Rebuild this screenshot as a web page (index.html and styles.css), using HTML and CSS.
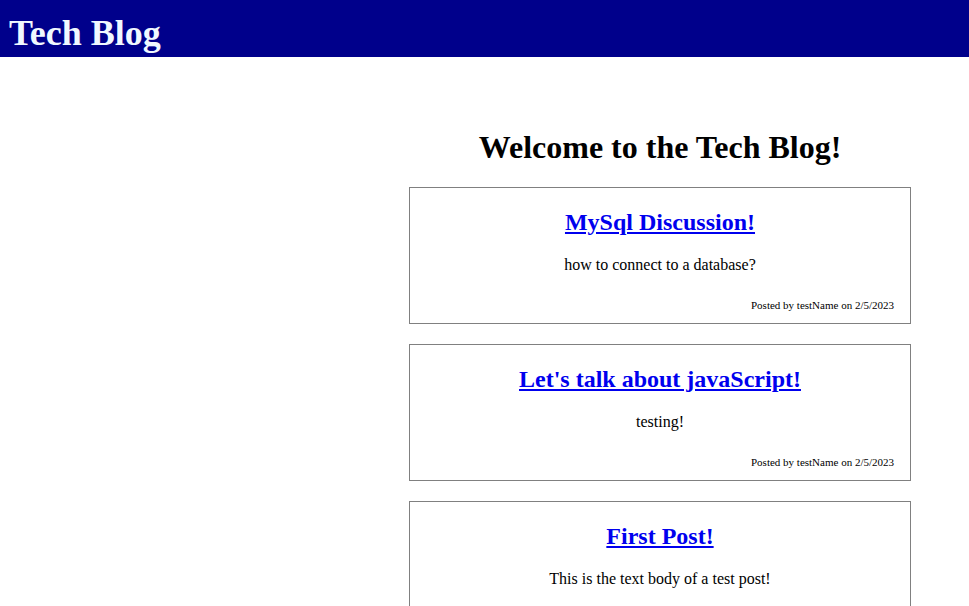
FILE: index.html
```html
<!DOCTYPE html>
<html>
<head>
<meta charset="utf-8">
<title>Tech Blog</title>
<link rel="stylesheet" href="styles.css">
</head>
<body>
<header class="site-header">
  <h1 class="site-title">Tech Blog</h1>
</header>
<div class="layout">
  <aside class="sidebar"></aside>
  <main class="content">
    <h1 class="welcome">Welcome to the Tech Blog!</h1>
    <article class="post">
      <h2 class="post-title"><a href="#">MySql Discussion!</a></h2>
      <p class="post-body">how to connect to a database?</p>
      <p class="post-meta">Posted by testName on 2/5/2023</p>
    </article>
    <article class="post">
      <h2 class="post-title"><a href="#">Let's talk about javaScript!</a></h2>
      <p class="post-body">testing!</p>
      <p class="post-meta">Posted by testName on 2/5/2023</p>
    </article>
    <article class="post">
      <h2 class="post-title"><a href="#">First Post!</a></h2>
      <p class="post-body">This is the text body of a test post!</p>
      <p class="post-meta">Posted by testName on 2/5/2023</p>
    </article>
  </main>
</div>
</body>
</html>
```
FILE: styles.css
```css
html, body {
  margin: 0;
  padding: 0;
  background: #ffffff;
  font-family: "Liberation Serif", "Times New Roman", serif;
  color: #000000;
}

.site-header {
  background: #00008b;
  height: 57px;
  padding: 0 9px;
  display: flex;
  align-items: center;
}

.site-title {
  margin: 0;
  padding-top: 9px;
  font-size: 36px;
  font-weight: bold;
  color: #f0f8ff;
  line-height: 41px;
}

.layout {
  display: grid;
  grid-template-columns: 409px 502px;
  padding-top: 51px;
}

.content {
  display: flex;
  flex-direction: column;
}

.welcome {
  text-align: center;
  font-size: 32px;
  margin: 21px 0 21px;
  line-height: 37px;
}

.post {
  border: 1px solid #808080;
  margin-bottom: 20px;
  padding: 0 16px 11px;
  text-align: center;
}

.post-title {
  font-size: 24px;
  margin: 20px 0 20px;
  line-height: 28px;
}

.post-title a {
  color: #0000ee;
  text-decoration: underline;
}

.post-body {
  font-size: 16px;
  margin: 0 0 25px;
  line-height: 18px;
}

.post-meta {
  font-size: 11px;
  text-align: right;
  margin: 0;
  line-height: 13px;
}
```
